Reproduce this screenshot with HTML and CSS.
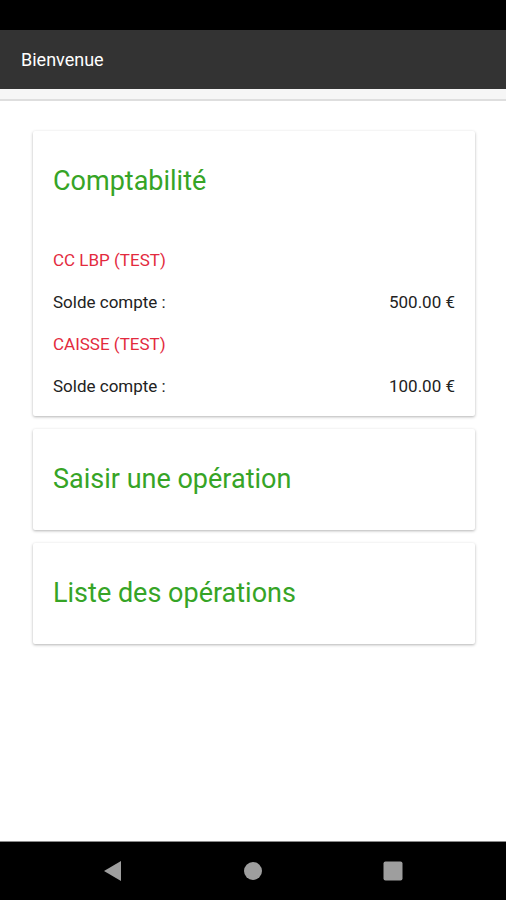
FILE: index.html
```html
<!DOCTYPE html>
<html lang="fr">
    <head>
        <meta charset="UTF-8" />
        <meta name="viewport" content="width=device-width, initial-scale=1.0" />
        <title>Bienvenue</title>
        <link rel="stylesheet" href="styles.css">
    </head>
    <body>
        <div class="status-bar"></div>

        <div class="app-bar">Bienvenue</div>
        <div class="app-bar-shadow"></div>

        <div class="content">
            <div class="card">
                <h2 class="card-title">Comptabilité</h2>

                <div class="account-name">CC LBP (TEST)</div>
                <div class="account-row">
                    <span>Solde compte :</span>
                    <span>500.00 €</span>
                </div>

                <div class="account-name">CAISSE (TEST)</div>
                <div class="account-row">
                    <span>Solde compte :</span>
                    <span>100.00 €</span>
                </div>
            </div>

            <div class="card card-link">
                <h2 class="card-title">Saisir une opération</h2>
            </div>

            <div class="card card-link">
                <h2 class="card-title">Liste des opérations</h2>
            </div>
        </div>

        <div class="nav-bar">
            <svg class="nav-icon back" width="20" height="22" viewBox="0 0 20 22">
                <polygon points="19,1 19,21 2,11" fill="#9e9e9e" />
            </svg>
            <svg class="nav-icon home" width="20" height="20" viewBox="0 0 20 20">
                <circle cx="10" cy="10" r="9" fill="#9e9e9e" />
            </svg>
            <svg class="nav-icon recent" width="20" height="20" viewBox="0 0 20 20">
                <rect x="0.5" y="0.5" width="19" height="19" rx="2" fill="#9e9e9e" />
            </svg>
        </div>
    </body>
</html>
```

FILE: styles.css
```css
body {
    font-family: Roboto, "Noto Sans", sans-serif;
    margin: 0;
    padding: 0;
    height: 100vh;
    display: flex;
    flex-direction: column;
    background: #fff;
}

.status-bar {
    height: 30px;
    background: #000;
}

.app-bar {
    height: 59px;
    background: #333333;
    color: #fff;
    font-size: 18px;
    display: flex;
    align-items: center;
    padding-left: 21px;
}

.app-bar-shadow {
    height: 10px;
    background: #f6f6f6;
    border-bottom: 2px solid #dedede;
}

.content {
    flex: 1;
    padding: 30px 31px 0 33px;
}

.card {
    background: #fff;
    border-radius: 2px;
    box-shadow: 0 1px 3px rgba(0, 0, 0, 0.3);
    padding: 20px 20px 9px;
    margin-bottom: 13px;
}

.card-link {
    padding-bottom: 21px;
}

.card-title {
    margin: 0;
    font-size: 27px;
    font-weight: 400;
    line-height: 60px;
    color: #36a426;
}

.card:first-child .card-title {
    margin-bottom: 28px;
}

.account-name,
.account-row {
    height: 42px;
    line-height: 42px;
    font-size: 17px;
}

.account-name {
    color: #e32a3e;
}

.account-row {
    display: flex;
    justify-content: space-between;
    color: #222;
}

.nav-bar {
    height: 58px;
    background: #000;
    border-top: 1px solid #8a8a8a;
    display: flex;
    align-items: center;
    padding-left: 102px;
}

.home {
    margin-left: 121px;
}

.recent {
    margin-left: 120px;
}
```
